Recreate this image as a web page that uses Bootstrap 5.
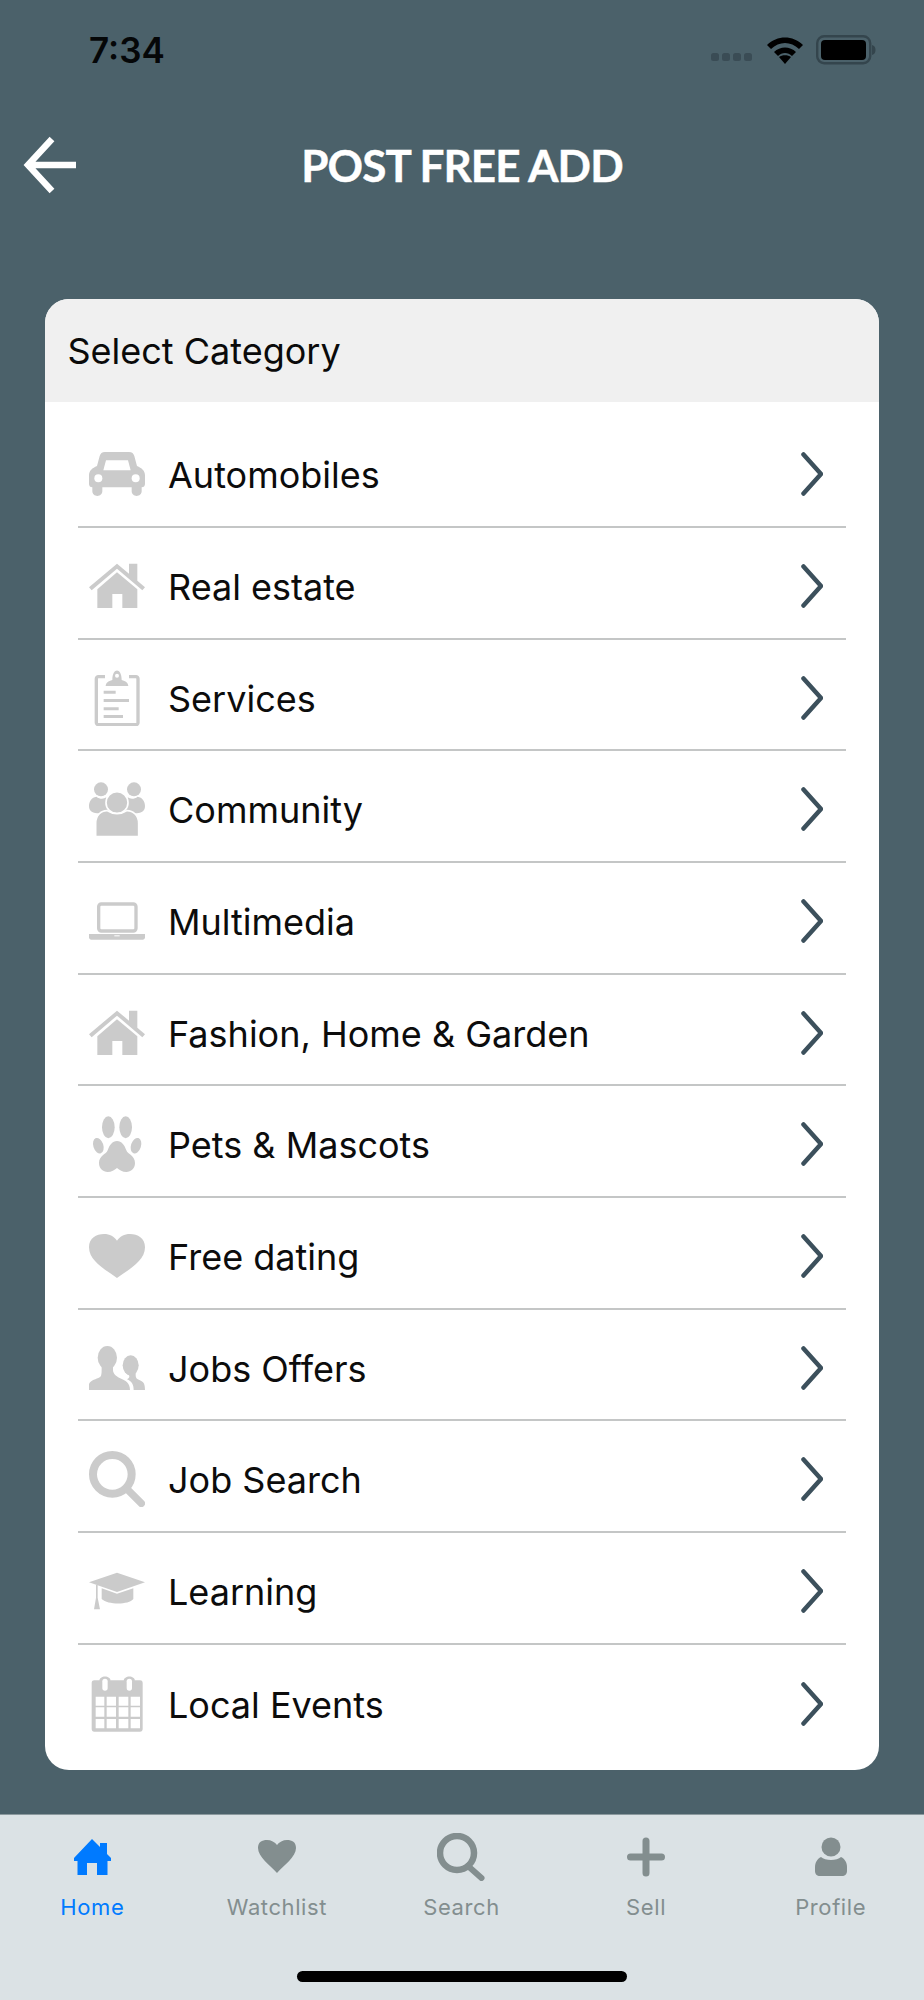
<!DOCTYPE html>
<html lang="en">
<head>
<meta charset="utf-8">
<title>Post free add</title>
<link rel="stylesheet" href="https://cdn.jsdelivr.net/npm/bootstrap@5.3.0/dist/css/bootstrap.min.css">
<style>
body{background:#4b616a;margin:0;font-family:Inter,"Liberation Sans",sans-serif;}
.app-page{width:924px;height:2000px;}
.status-row{height:100px;padding:0 48px 0 89px;}
.status-time{font-size:35px;font-weight:600;color:#050708;line-height:1;}
.sig-dot{width:8px;height:8px;border-radius:2.5px;background:#3a4c55;margin-right:3px;}
.sig-wrap{margin-top:13px;margin-right:12px;}
.wifi-ico{margin-right:13.5px;}
.app-head{height:130px;display:grid;grid-template-columns:1fr auto 1fr;align-items:center;padding:0 22px;margin-bottom:69px;}
.app-title{font-family:Lato,"Liberation Sans",sans-serif;font-weight:700;font-size:44px;line-height:1;color:#fff;margin:0;letter-spacing:-.9px;-webkit-text-stroke:.4px #fff;}
.cat-card{margin:0 45px;width:834px;border:0;border-radius:24px;overflow:hidden;background:#fff;}
.cat-head{height:103px;background:#f0f0f0;border:0;padding:0 0 0 22.5px;font-size:36px;color:#0a0a0a;border-radius:0!important;}
.cat-list{padding:14.5px 33px 14px;}
.cat-list .cat-row{height:111.67px;padding:6px 23px 0 11px;border-style:solid;border-color:#c4c6c6;border-width:0 0 2px;border-radius:0!important;font-size:36px;color:#0c0c0c;gap:23px;background:transparent;}
.cat-list .cat-row:last-child{border-bottom-width:0;}
.cat-label{margin-top:2px;}
.cat-ico{width:56px;height:56px;flex:none;color:#cbcbcb;}
.chev{width:22px;height:44px;flex:none;}
.tab-bar{height:186px;background:#dbe2e5;border-top:1px solid #8b999e;}
.tab-cell{width:184.6px;color:#838e8f;font-size:22px;letter-spacing:.6px;line-height:1;}
.tab-cell svg{width:48px;height:48px;display:block;margin-top:18px;margin-bottom:15px;}
.tab-on{color:#007aff;}
.home-bar{width:330px;height:11px;background:#000;border-radius:6px;margin:0 auto 18px;}
</style>
</head>
<body>
<svg width="0" height="0" class="position-absolute">
<defs>
<symbol id="i-house" viewBox="0 0 168 168">
<path fill="currentColor" d="M0 88 84 17l36 30V17h25v51l23 20-8 9-76-65L8 97z"/>
<path fill="currentColor" d="M25 94 84 43l61 51v56h-45v-42H70v42H25z"/>
</symbol>
</defs>
</svg>
<div class="app-page d-flex flex-column">
<div class="status-row d-flex align-items-center justify-content-between">
<span class="status-time">7:34</span>
<div class="d-flex align-items-center">
<div class="d-flex sig-wrap"><span class="sig-dot"></span><span class="sig-dot"></span><span class="sig-dot"></span><span class="sig-dot"></span></div>
<svg width="36" height="28" viewBox="0 0 36 28" class="wifi-ico"><path d="M0 9C10-1 26-1 36 9l-4 4C24 5 12 5 4 13z" fill="#000"/><path d="M7 16c6-6 16-6 22 0l-4 4c-4-4-10-4-14 0z" fill="#000"/><path d="M12 21c3-2.500 9-2.500 12 0l-6 7z" fill="#000"/></svg>
<svg width="60" height="30" viewBox="0 0 60 30"><rect x="1.200" y="1.200" width="53" height="27" rx="7" fill="none" stroke="#34454d" stroke-width="2.400"/><rect x="5" y="5" width="45" height="20" rx="4" fill="#000"/><path d="M56 10c2.500 .5 3.500 2.500 3.500 5s-1 4.500-3.500 5z" fill="#34454d"/></svg>
</div>
</div>
<div class="app-head">
<svg width="56" height="58" viewBox="0 0 56 58" aria-label="Back"><path d="M30 3 6 29l24 26M6 29h48" fill="none" stroke="#fff" stroke-width="6.500"/></svg>
<h1 class="app-title">POST FREE ADD</h1>
<span></span>
</div>
<div class="card cat-card">
<div class="card-header cat-head d-flex align-items-center">Select Category</div>
<ul class="list-group list-group-flush cat-list">
<li class="list-group-item cat-row d-flex align-items-center">
<svg class="cat-ico" viewBox="0 0 168 168"><path fill="currentColor" d="M48 18h72c9 0 14 5 16 12l8 30c14 6 24 14 24 28v26c0 6-4 10-10 10v12c0 8-7 14-15 14s-15-6-15-14v-12H40v12c0 8-7 14-15 14s-15-6-15-14v-12c-6 0-10-4-10-10V88c0-14 10-22 24-28l8-30c2-7 7-12 16-12z"/><path fill="#fff" d="M51 43h66l8 30H43z"/><circle cx="28" cy="97" r="12" fill="#fff"/><circle cx="140" cy="97" r="12" fill="#fff"/></svg>
<span class="cat-label">Automobiles</span>
<svg class="chev ms-auto" viewBox="0 0 22 44"><path d="M2.500 2.500 20 22 2.500 41.500" fill="none" stroke="#3c505c" stroke-width="4.500" stroke-linecap="round" stroke-linejoin="round"/></svg>
</li>
<li class="list-group-item cat-row d-flex align-items-center">
<svg class="cat-ico"><use href="#i-house"/></svg>
<span class="cat-label">Real estate</span>
<svg class="chev ms-auto" viewBox="0 0 22 44"><path d="M2.500 2.500 20 22 2.500 41.500" fill="none" stroke="#3c505c" stroke-width="4.500" stroke-linecap="round" stroke-linejoin="round"/></svg>
</li>
<li class="list-group-item cat-row d-flex align-items-center">
<svg class="cat-ico" viewBox="0 0 168 168"><path fill="none" stroke="currentColor" stroke-width="10" d="M48 20H28c-3 0-6 3-6 6v132c0 3 3 6 6 6h113c3 0 6-3 6-6V26c0-3-3-6-6-6h-21"/><path fill="currentColor" d="M50 48c0-9 8-15 20-18C70 -8 98 -8 98 30c12 3 20 9 20 18z"/><circle cx="84" cy="17" r="6" fill="#fff"/><path fill="currentColor" d="M44 62h36v9H44zM44 87h76v9H44zM44 112h45v9H44zM44 135h58v9H44z"/></svg>
<span class="cat-label">Services</span>
<svg class="chev ms-auto" viewBox="0 0 22 44"><path d="M2.500 2.500 20 22 2.500 41.500" fill="none" stroke="#3c505c" stroke-width="4.500" stroke-linecap="round" stroke-linejoin="round"/></svg>
</li>
<li class="list-group-item cat-row d-flex align-items-center">
<svg class="cat-ico" viewBox="0 0 168 168"><g fill="currentColor"><circle cx="36" cy="25" r="21"/><circle cx="135" cy="25" r="21"/><path d="M0 75c0-14 8-26 22-28 10 8 22 8 30 2l20 40-40 8C12 97 0 92 0 75zM168 75c0-14-8-26-22-28-10 8-22 8-30 2l-20 40 40 8c20 0 32-5 32-22z"/></g><circle cx="84" cy="65" r="33" fill="currentColor" stroke="#fff" stroke-width="5"/><path d="M20 165v-38c0-24 16-38 34-38 18 12 42 12 60 0 18 0 35 14 35 38v38c0 0-1 2-10 2H30c-8 0-10-2-10-2z" fill="currentColor" stroke="#fff" stroke-width="5"/></svg>
<span class="cat-label">Community</span>
<svg class="chev ms-auto" viewBox="0 0 22 44"><path d="M2.500 2.500 20 22 2.500 41.500" fill="none" stroke="#3c505c" stroke-width="4.500" stroke-linecap="round" stroke-linejoin="round"/></svg>
</li>
<li class="list-group-item cat-row d-flex align-items-center">
<svg class="cat-ico" viewBox="0 0 168 168"><rect x="29" y="33" width="112" height="81" rx="8" fill="none" stroke="currentColor" stroke-width="10"/><path fill="currentColor" d="M0 123h168v10c0 4-3 7-7 7H7c-4 0-7-3-7-7z"/><rect x="76" y="127" width="16" height="3" fill="#fff"/></svg>
<span class="cat-label">Multimedia</span>
<svg class="chev ms-auto" viewBox="0 0 22 44"><path d="M2.500 2.500 20 22 2.500 41.500" fill="none" stroke="#3c505c" stroke-width="4.500" stroke-linecap="round" stroke-linejoin="round"/></svg>
</li>
<li class="list-group-item cat-row d-flex align-items-center">
<svg class="cat-ico"><use href="#i-house"/></svg>
<span class="cat-label">Fashion, Home &amp; Garden</span>
<svg class="chev ms-auto" viewBox="0 0 22 44"><path d="M2.500 2.500 20 22 2.500 41.500" fill="none" stroke="#3c505c" stroke-width="4.500" stroke-linecap="round" stroke-linejoin="round"/></svg>
</li>
<li class="list-group-item cat-row d-flex align-items-center">
<svg class="cat-ico" viewBox="0 0 168 168"><g fill="currentColor"><ellipse cx="58" cy="34" rx="19" ry="33"/><ellipse cx="110" cy="34" rx="19" ry="33"/><ellipse cx="28" cy="89" rx="15" ry="24" transform="rotate(-18 28 89)"/><ellipse cx="141" cy="89" rx="15" ry="24" transform="rotate(18 141 89)"/><path d="M84 75c14 0 22 12 28 28 4 12 26 16 26 38 0 16-12 27-26 27-12 0-20-6-28-12-8 6-16 12-28 12-14 0-26-11-26-27 0-22 22-26 26-38 6-16 14-28 28-28z"/></g></svg>
<span class="cat-label">Pets &amp; Mascots</span>
<svg class="chev ms-auto" viewBox="0 0 22 44"><path d="M2.500 2.500 20 22 2.500 41.500" fill="none" stroke="#3c505c" stroke-width="4.500" stroke-linecap="round" stroke-linejoin="round"/></svg>
</li>
<li class="list-group-item cat-row d-flex align-items-center">
<svg class="cat-ico" viewBox="0 0 168 168"><path fill="currentColor" d="M84 150C50 125 0 100 0 58 0 30 22 18 45 18c17 0 31 8 39 20 8-12 22-20 39-20 23 0 45 12 45 40 0 42-50 67-84 92z"/></svg>
<span class="cat-label">Free dating</span>
<svg class="chev ms-auto" viewBox="0 0 22 44"><path d="M2.500 2.500 20 22 2.500 41.500" fill="none" stroke="#3c505c" stroke-width="4.500" stroke-linecap="round" stroke-linejoin="round"/></svg>
</li>
<li class="list-group-item cat-row d-flex align-items-center">
<svg class="cat-ico" viewBox="0 0 168 168"><g fill="currentColor"><ellipse cx="55" cy="53" rx="29" ry="35"/><path d="M38 80h34v10c0 10 8 18 20 24 18 8 31 14 31 36H0v-18c6-12 22-14 32-20 6-4 6-12 6-32z"/><ellipse cx="125" cy="76" rx="24" ry="30"/><path d="M110 98h30v8c0 12 8 12 18 18 6 4 10 8 10 26h-34c0-16-6-26-20-32 8-4 8-8 6-12z"/></g></svg>
<span class="cat-label">Jobs Offers</span>
<svg class="chev ms-auto" viewBox="0 0 22 44"><path d="M2.500 2.500 20 22 2.500 41.500" fill="none" stroke="#3c505c" stroke-width="4.500" stroke-linecap="round" stroke-linejoin="round"/></svg>
</li>
<li class="list-group-item cat-row d-flex align-items-center">
<svg class="cat-ico" viewBox="0 0 168 168"><circle cx="70" cy="70" r="58" fill="none" stroke="currentColor" stroke-width="24"/><path d="M118 118 157 157" stroke="currentColor" stroke-width="22" stroke-linecap="round"/></svg>
<span class="cat-label">Job Search</span>
<svg class="chev ms-auto" viewBox="0 0 22 44"><path d="M2.500 2.500 20 22 2.500 41.500" fill="none" stroke="#3c505c" stroke-width="4.500" stroke-linecap="round" stroke-linejoin="round"/></svg>
</li>
<li class="list-group-item cat-row d-flex align-items-center">
<svg class="cat-ico" viewBox="0 0 168 168"><g fill="currentColor"><path d="M84 29 168 58 84 87 0 58z"/><path d="M38 76 84 92l49-16v32c-14 18-76 18-95 0z"/><path d="M21 66h5v38l7 35H15l6-35z"/></g></svg>
<span class="cat-label">Learning</span>
<svg class="chev ms-auto" viewBox="0 0 22 44"><path d="M2.500 2.500 20 22 2.500 41.500" fill="none" stroke="#3c505c" stroke-width="4.500" stroke-linecap="round" stroke-linejoin="round"/></svg>
</li>
<li class="list-group-item cat-row d-flex align-items-center">
<svg class="cat-ico" viewBox="0 0 168 168"><path fill="currentColor" d="M16 13h15V15c0-18 34-18 34 0v-2h39v2c0-18 34-18 34 0v-2h15c6 0 8 4 8 8v138c0 5-3 8-8 8H16c-5 0-8-3-8-8V21c0-4 2-8 8-8z"/><g fill="#fff"><rect x="40" y="8" width="16" height="36" rx="8"/><rect x="113" y="8" width="16" height="36" rx="8"/><path d="M20 62h26v27H20zM53 62h28v27H53zM89 62h29v27H89zM125 62h28v27h-28zM20 94h26v28H20zM53 94h28v28H53zM89 94h29v28H89zM125 94h28v28h-28zM20 129h26v28H20zM53 129h28v28H53zM89 129h29v28H89zM125 129h28v28h-28z"/></g></svg>
<span class="cat-label">Local Events</span>
<svg class="chev ms-auto" viewBox="0 0 22 44"><path d="M2.500 2.500 20 22 2.500 41.500" fill="none" stroke="#3c505c" stroke-width="4.500" stroke-linecap="round" stroke-linejoin="round"/></svg>
</li>
</ul>
</div>
<nav class="tab-bar mt-auto d-flex flex-column">
<div class="d-flex">
<div class="tab-cell tab-on d-flex flex-column align-items-center">
<svg viewBox="0 0 48 48"><path fill="currentColor" d="M24 6 32 14V10h7v11l4 4v3h-3.500v14H29V30H19v12H9.500V28H6v-3z"/></svg>
<span>Home</span>
</div>
<div class="tab-cell d-flex flex-column align-items-center">
<svg viewBox="0 0 48 48"><path fill="currentColor" d="M24 40C17 32 5 24 5 15 5 9 9 7 14 7c4 0 8 2 10 5 2-3 6-5 10-5 5 0 9 2 9 8 0 9-12 17-19 25z"/></svg>
<span>Watchlist</span>
</div>
<div class="tab-cell d-flex flex-column align-items-center">
<svg viewBox="0 0 48 48"><circle cx="20" cy="20" r="17" fill="none" stroke="currentColor" stroke-width="6.500"/><path d="M31 33 44.500 45" stroke="currentColor" stroke-width="6" stroke-linecap="round"/></svg>
<span>Search</span>
</div>
<div class="tab-cell d-flex flex-column align-items-center">
<svg viewBox="0 0 48 48"><path d="M24 8V40M8.500 24H39.500" stroke="currentColor" stroke-width="7" stroke-linecap="round"/></svg>
<span>Sell</span>
</div>
<div class="tab-cell d-flex flex-column align-items-center">
<svg viewBox="0 0 48 48"><ellipse cx="24" cy="14" rx="9.500" ry="9.500" fill="currentColor"/><path fill="currentColor" d="M14 24c4 4 16 4 20 0 4 2 6 6 6 10v4c0 3-2 5-5 5H13c-3 0-5-2-5-5v-4c0-4 2-8 6-10z"/></svg>
<span>Profile</span>
</div>
</div>
<div class="home-bar mt-auto"></div>
</nav>
</div>
</body>
</html>
